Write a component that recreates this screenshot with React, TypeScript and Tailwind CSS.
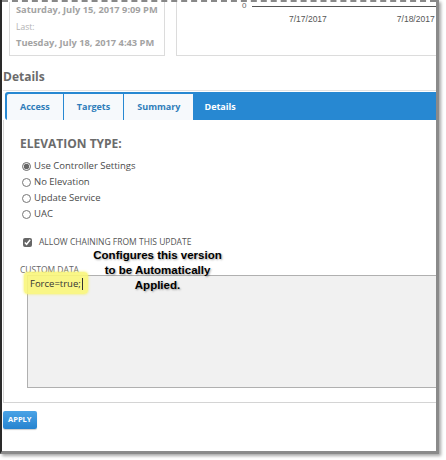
import { useState } from "react";

const radios = ["Use Controller Settings", "No Elevation", "Update Service", "UAC"];
const tabs = ["Access", "Targets", "Summary"];

const App = () => {
	const [elevation, setElevation] = useState(0);
	const [chain, setChain] = useState(true);

	return (
		<div className="relative w-[446px] h-[460px] bg-white overflow-hidden font-['Open_Sans',sans-serif]">
			<div className="w-[439px] h-[454px] border-l-2 border-[#2a2a2a] border-r-[3px] border-r-[#8a8a8a] border-b-[3px] border-b-[#8a8a8a] shadow-[2px_2px_3px_rgba(0,0,0,0.35)]">
				{/* top cards */}
				<div className="flex h-[56px] border-t-2 border-dashed border-[#888]">
					<div className="ml-[7px] w-[156px] h-[54px] border border-t-0 border-[#dcdcdc] pl-[6px] whitespace-nowrap">
						<p className="text-[9.3px] font-bold text-[#a3a3a3] leading-[14px] mt-[1px]">Saturday, July 15, 2017 9:09 PM</p>
						<p className="text-[8.5px] text-[#b3b3b3] leading-[12px] mt-[4px]">Last:</p>
						<p className="text-[9.3px] font-bold text-[#a3a3a3] leading-[14px] mt-[3px]">Tuesday, July 18, 2017 4:43 PM</p>
					</div>
					<div className="ml-[11px] flex-1 h-[54px] border border-t-0 border-r-0 border-[#dcdcdc] relative">
						<div className="flex items-center">
							<span className="ml-[65px] text-[8px] text-[#666] leading-[8px] font-['Liberation_Sans',sans-serif]">0</span>
							<div className="ml-[6px] flex-1 h-px bg-[#555]"></div>
						</div>
						<div className="flex pl-[112px] mt-[3px] text-[8.5px] text-[#555] font-['Liberation_Sans',sans-serif]">
							<span>7/17/2017</span>
							<span className="ml-[70px]">7/18/2017</span>
						</div>
					</div>
				</div>

				<h2 className="ml-[1px] mt-[12px] text-[12px] font-bold text-[#6b6b6b] leading-[18px]">Details</h2>

				{/* tabs */}
				<div className="ml-[1px] mt-[4px] border-t border-[#e3e3e3] pt-[1px]">
					<div className="flex h-[28px] bg-[#2788d2] rounded-l-[3px] pl-[2px] pt-[2px] ml-[2px]">
						{tabs.map((t) => (
							<div key={t} className="h-[26px] px-[13px] mr-px bg-[#f6f9fc] flex items-center text-[9px] font-bold text-[#2f7dba] first:rounded-tl-[2px]">
								{t}
							</div>
						))}
						<div className="h-[26px] px-[10px] flex items-center text-[9px] font-bold text-white">Details</div>
					</div>

					<div className="border-l border-[#d4d4d4] border-b pb-[14px] relative">
						<h3 className="ml-[16px] pt-[15px] text-[12px] font-bold text-[#6b6b6b] leading-[18px]">ELEVATION TYPE:</h3>
						<div className="ml-[18px] mt-[5px] flex flex-col">
							{radios.map((r, i) => (
								<label key={r} className="flex items-center h-[16px] text-[9.5px] text-[#4a4a4a]">
									<input
										type="radio"
										checked={elevation === i}
										onChange={() => setElevation(i)}
										className="w-[9px] h-[9px] mr-[3px] accent-[#666]"
									/>
									{r}
								</label>
							))}
						</div>
						<label className="ml-[19px] mt-[14px] flex items-center text-[8.5px] text-[#555]">
							<input
								type="checkbox"
								checked={chain}
								onChange={(e) => setChain(e.target.checked)}
								className="w-[9px] h-[9px] mr-[7px] accent-[#666]"
							/>
							ALLOW CHAINING FROM THIS UPDATE
						</label>
						<p className="ml-[16px] mt-[15px] text-[8.5px] text-[#666] leading-[12px]">CUSTOM DATA</p>
						<div className="ml-[23px] mt-[-1px] h-[113px] bg-[#f1f1f1] border border-[#b0b0b0] border-r-0 relative">
							<div className="absolute left-[-4px] top-[-4px] w-[64px] h-[22px] rounded-[4px] bg-[#faf67a]/90 shadow-[0_0_3px_#f2ee5a]"></div>
							<div className="relative pl-[2px] pt-[1px] flex items-center text-[9.5px] text-[#333] leading-[14px]">
								Force=true;<span className="inline-block w-px h-[12px] bg-[#333] ml-px"></span>
							</div>
						</div>

						<div className="absolute left-[76px] top-[128px] w-[155px] text-center text-[11.5px] font-bold leading-[15px] text-black font-['Liberation_Sans',sans-serif] [text-shadow:1px_1px_2px_rgba(0,0,0,0.35)]">
							Configures this version
							<br />
							to be Automatically
							<br />
							Applied.
						</div>
					</div>
				</div>

				<button className="ml-[1px] mt-[8px] h-[18px] px-[5px] rounded-[2px] bg-gradient-to-b from-[#4aa3e6] to-[#2583cf] text-white text-[7.5px] font-bold shadow-[0_1px_1px_rgba(0,0,0,0.2)]">
					APPLY
				</button>
			</div>
		</div>
	);
};

export default App;
